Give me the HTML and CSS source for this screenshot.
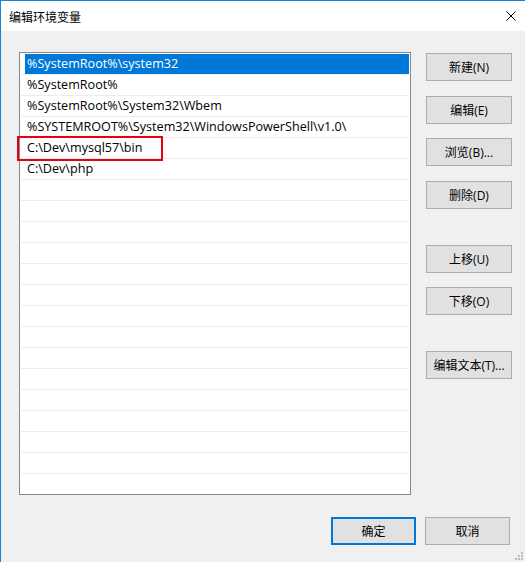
FILE: index.html
```html
<!DOCTYPE html>
<html lang="zh-CN">
<head>
    <meta charset="UTF-8">
    <title>编辑环境变量</title>
    <link rel="stylesheet" href="styles.css">
</head>
<body>
    <div class="window">
        <!-- Title bar -->
        <div class="titlebar">
            <span class="title">编辑环境变量</span>
            <svg class="close" width="10" height="10" viewBox="0 0 10 10">
                <path d="M0.5 0.5 L9.5 9.5 M9.5 0.5 L0.5 9.5" stroke="#000" stroke-width="1" fill="none"/>
            </svg>
        </div>

        <div class="content">
            <div class="main">
                <!-- Path list -->
                <div class="listbox">
                    <div class="row selected"><span class="cell">%SystemRoot%\system32</span></div>
                    <div class="row"><span class="cell">%SystemRoot%</span></div>
                    <div class="row"><span class="cell">%SystemRoot%\System32\Wbem</span></div>
                    <div class="row"><span class="cell">%SYSTEMROOT%\System32\WindowsPowerShell\v1.0\</span></div>
                    <div class="row"><span class="cell">C:\Dev\mysql57\bin</span></div>
                    <div class="row"><span class="cell">C:\Dev\php</span></div>
                    <div class="row"></div>
                    <div class="row"></div>
                    <div class="row"></div>
                    <div class="row"></div>
                    <div class="row"></div>
                    <div class="row"></div>
                    <div class="row"></div>
                    <div class="row"></div>
                    <div class="row"></div>
                    <div class="row"></div>
                    <div class="row"></div>
                    <div class="row"></div>
                    <div class="row"></div>
                    <div class="row"></div>
                    <div class="row last"></div>
                </div>
                <div class="highlight"></div>

                <!-- Side buttons -->
                <div class="side">
                    <div class="group">
                        <button class="btn">新建(N)</button>
                        <button class="btn">编辑(E)</button>
                        <button class="btn">浏览(B)...</button>
                        <button class="btn">删除(D)</button>
                    </div>
                    <div class="group">
                        <button class="btn">上移(U)</button>
                        <button class="btn">下移(O)</button>
                    </div>
                    <div class="group">
                        <button class="btn">编辑文本(T)...</button>
                    </div>
                </div>
            </div>

            <!-- Dialog buttons -->
            <div class="footer">
                <button class="btn default">确定</button>
                <button class="btn">取消</button>
            </div>

            <svg class="grip" width="9" height="9" viewBox="0 0 9 9">
                <rect x="6" y="0" width="2" height="2" fill="#bcbcbc"/>
                <rect x="3" y="3" width="2" height="2" fill="#bcbcbc"/>
                <rect x="6" y="3" width="2" height="2" fill="#bcbcbc"/>
                <rect x="0" y="6" width="2" height="2" fill="#bcbcbc"/>
                <rect x="3" y="6" width="2" height="2" fill="#bcbcbc"/>
                <rect x="6" y="6" width="2" height="2" fill="#bcbcbc"/>
            </svg>
        </div>
    </div>
</body>
</html>
```

FILE: styles.css
```css
/* General Styles */
body {
    margin: 0;
    padding: 0;
    font-family: "Open Sans", "Noto Sans CJK SC", sans-serif;
    font-size: 12px;
    color: #000;
    background: #f0f0f0;
}

.window {
    width: 524px;
    height: 561px;
    border-top: 1px solid #1883d7;
    border-left: 1px solid #1883d7;
    display: flex;
    flex-direction: column;
    position: relative;
}

/* Title bar */
.titlebar {
    height: 30px;
    background: #fff;
    display: flex;
    align-items: center;
    justify-content: space-between;
    padding: 0 9px 0 8px;
}

.title {
    font-family: "Noto Sans CJK SC", sans-serif;
    font-size: 12px;
}

.close {
    display: block;
}

/* Content */
.content {
    flex: 1;
    background: #f0f0f0;
    padding: 21px 0 0 18px;
    display: flex;
    flex-direction: column;
}

.main {
    display: flex;
    gap: 15px;
    position: relative;
}

.listbox {
    width: 390px;
    height: 440px;
    border: 1px solid #828790;
    background: #fff;
    padding-top: 1px;
    box-sizing: content-box;
    overflow: hidden;
}

.row {
    height: 20px;
    border-bottom: 1px solid #ececec;
    margin: 0 1px;
    padding-left: 4px;
    display: flex;
}

.cell {
    flex: 1;
    padding-left: 2px;
    line-height: 20px;
    font-size: 12.6px;
    white-space: nowrap;
}

.row.selected .cell {
    background: #0078d7;
    color: #fff;
}

/* Red marker over the mysql row */
.highlight {
    position: absolute;
    left: -2px;
    top: 84px;
    width: 142px;
    height: 21px;
    border: 2px solid #e60012;
}

/* Buttons */
.side {
    display: flex;
    flex-direction: column;
    gap: 36px;
    padding-top: 1px;
}

.group {
    display: flex;
    flex-direction: column;
    gap: 14.5px;
}

.btn {
    width: 86px;
    height: 28px;
    background: #e1e1e1;
    border: 1px solid #adadad;
    font-family: "Open Sans", "Noto Sans CJK SC", sans-serif;
    font-size: 12px;
    color: #000;
    padding: 0;
    margin: 0;
}

.footer {
    display: flex;
    justify-content: flex-end;
    gap: 9px;
    padding: 22px 15px 0 0;
}

.footer .btn {
    width: 85px;
}

.btn.default {
    border: 2px solid #0078d7;
}

.grip {
    position: absolute;
    right: 1px;
    bottom: 1px;
}
```
